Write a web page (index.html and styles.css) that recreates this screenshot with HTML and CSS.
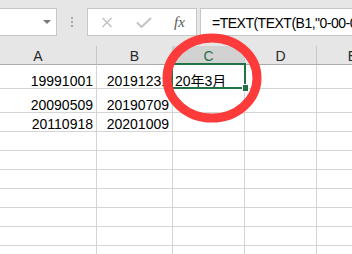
FILE: index.html
```html
<!DOCTYPE html>
<html lang="zh">
<head>
  <meta charset="UTF-8" />
  <title>Sheet</title>
  <link rel="stylesheet" href="styles.css">
</head>
<body>

  <div class="toolbar">
    <div class="name-box"><span class="drop"></span></div>
    <div class="grip"><i></i><i></i><i></i></div>
    <div class="fx-box">
      <svg class="ico" width="12" height="11" viewBox="0 0 12 11"><path d="M1.5 1 L10.5 10 M10.5 1 L1.5 10" stroke="#c4c4c4" stroke-width="1.6" fill="none"/></svg>
      <svg class="ico" width="16" height="11" viewBox="0 0 16 11"><path d="M1 5.5 L5.5 10 L15 1" stroke="#c4c4c4" stroke-width="2" fill="none"/></svg>
      <span class="fx">fx</span>
    </div>
    <div class="formula">=TEXT(TEXT(B1,"0-00-00"),"yy年m月")</div>
  </div>

  <div class="sheet-wrap">
    <div class="sheet">
      <div class="hd">A</div>
      <div class="hd">B</div>
      <div class="hd sel">C</div>
      <div class="hd">D</div>
      <div class="hd">E</div>

      <div class="cell num">19991001</div>
      <div class="cell num">20191231</div>
      <div class="cell active">20年3月</div>
      <div class="cell"></div>
      <div class="cell"></div>

      <div class="cell num">20090509</div>
      <div class="cell num">20190709</div>
      <div class="cell"></div>
      <div class="cell"></div>
      <div class="cell"></div>

      <div class="cell num">20110918</div>
      <div class="cell num">20201009</div>
      <div class="cell"></div>
      <div class="cell"></div>
      <div class="cell"></div>
    </div>
  </div>

  <!-- red marker circle drawn over the sheet -->
  <svg class="mark" width="352" height="254" viewBox="0 0 352 254">
    <ellipse cx="212" cy="78" rx="45" ry="40" fill="none" stroke="#fd3b3b" stroke-width="9"/>
  </svg>

  <script>
    // fill the empty rows below the data
    const sheet = document.querySelector(".sheet");
    for (let i = 0; i < 7 * 5; i++) {
      const c = document.createElement("div");
      c.className = "cell";
      sheet.appendChild(c);
    }
  </script>
</body>
</html>
```

FILE: styles.css
```css
* {
  box-sizing: border-box;
}
body {
  margin: 0;
  position: relative;
  width: 352px;
  height: 254px;
  overflow: hidden;
  background: #e6e6e6;
  font-family: 'Liberation Sans', 'Noto Sans CJK SC', sans-serif;
  font-size: 14px;
  color: #000;
}

.toolbar {
  height: 44px;
  padding-top: 8px;
  display: flex;
  align-items: flex-start;
}

.name-box {
  margin-left: -1px;
  width: 58px;
  height: 28px;
  background: #fff;
  border: 1px solid #c6c6c6;
  position: relative;
}

.drop {
  position: absolute;
  left: 43px;
  top: 11px;
  width: 0;
  height: 0;
  border-left: 4px solid transparent;
  border-right: 4px solid transparent;
  border-top: 4px solid #7a7a7a;
}

.grip {
  width: 30px;
  height: 28px;
  display: flex;
  flex-direction: column;
  align-items: center;
  justify-content: center;
  gap: 2px;
}

.grip i {
  display: block;
  width: 2px;
  height: 2px;
  background: #a8a8a8;
}

.fx-box {
  width: 110px;
  height: 28px;
  background: #fff;
  border: 1px solid #c6c6c6;
  display: flex;
  align-items: center;
  padding-left: 13px;
}

.fx-box .ico:nth-child(2) {
  margin-left: 23px;
}

.fx {
  margin-left: 22px;
  font-family: 'Liberation Serif', serif;
  font-style: italic;
  font-size: 15px;
  color: #5a5a5a;
}

.formula {
  margin-left: 3px;
  flex: 1;
  min-width: 0;
  height: 28px;
  background: #fff;
  border: 1px solid #c6c6c6;
  border-right: none;
  padding-left: 11px;
  display: flex;
  align-items: center;
  white-space: nowrap;
  overflow: hidden;
  letter-spacing: -0.5px;
}

.sheet-wrap {
  height: 210px;
  overflow: hidden;
}

.sheet {
  margin-left: -20px;
  display: grid;
  grid-template-columns: 117px 76px 72px 72px 72px;
  grid-template-rows: 21px 24px 24px 19px;
  grid-auto-rows: 19px;
}

.hd {
  margin-top: 2px;
  border-right: 1px solid #c8c8c8;
  border-bottom: 1px solid #ababab;
  display: flex;
  align-items: flex-end;
  justify-content: center;
  line-height: 14px;
  padding-bottom: 1px;
  color: #262626;
}

.hd.sel {
  background: #d2d2d2;
  color: #217346;
}

.cell {
  background: #fff;
  border-right: 1px solid #d4d4d4;
  border-bottom: 1px solid #d4d4d4;
  display: flex;
  align-items: flex-end;
  line-height: 14px;
  padding: 0 3px 0 2px;
  white-space: nowrap;
  overflow: hidden;
}

.cell.num {
  justify-content: flex-end;
}

.cell.active {
  position: relative;
  overflow: visible;
}

.cell.active::before {
  content: "";
  position: absolute;
  left: -2px;
  top: -2px;
  right: -2px;
  bottom: -1px;
  border: 2px solid #217346;
}

.cell.active::after {
  content: "";
  position: absolute;
  right: -4px;
  bottom: -3px;
  width: 5px;
  height: 6px;
  background: #217346;
  border: 1px solid #fff;
  box-sizing: content-box;
  margin: -1px;
}

.mark {
  position: absolute;
  left: 0;
  top: 0;
  pointer-events: none;
}
```
